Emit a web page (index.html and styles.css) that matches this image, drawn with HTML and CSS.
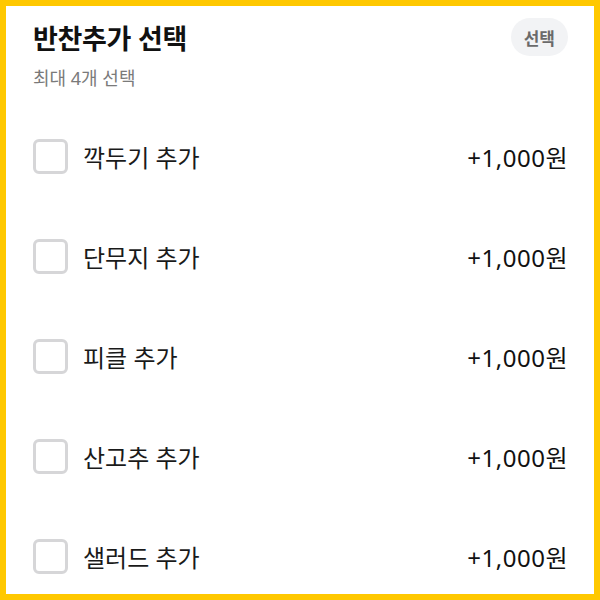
FILE: index.html
```html
<!doctype html>
<html lang="ko">
 <head>
  <meta charset="UTF-8">
  <title>반찬추가 선택</title>
  <link rel="stylesheet" href="styles.css">
 </head>
 <body>
  <section class="panel">
   <div class="head">
    <h2>반찬추가 선택</h2>
    <span class="badge">선택</span>
   </div>
   <p class="sub">최대 4개 선택</p>
   <ul class="list">
    <li class="row"><label class="opt"><input type="checkbox"><span class="box"></span><span class="name">깍두기 추가</span></label><span class="price">+1,000원</span></li>
    <li class="row"><label class="opt"><input type="checkbox"><span class="box"></span><span class="name">단무지 추가</span></label><span class="price">+1,000원</span></li>
    <li class="row"><label class="opt"><input type="checkbox"><span class="box"></span><span class="name">피클 추가</span></label><span class="price">+1,000원</span></li>
    <li class="row"><label class="opt"><input type="checkbox"><span class="box"></span><span class="name">산고추 추가</span></label><span class="price">+1,000원</span></li>
    <li class="row"><label class="opt"><input type="checkbox"><span class="box"></span><span class="name">샐러드 추가</span></label><span class="price">+1,000원</span></li>
   </ul>
  </section>
 </body>
</html>
```
FILE: styles.css
```css
*
{
  margin: 0;
  padding: 0;
  box-sizing: border-box;
  font-family: 'Noto Sans', 'Noto Sans CJK KR', sans-serif;
}
body
{
  width: 600px;
  height: 600px;
  overflow: hidden;
  background: #fff;
}
.panel
{
  width: 600px;
  height: 600px;
  border: 6px solid #ffc800;
  padding: 12px 26px 0 27px;
  overflow: hidden;
}
.head
{
  display: flex;
  justify-content: space-between;
  align-items: center;
  height: 38px;
}
.head h2
{
  font-size: 27px;
  font-weight: 700;
  color: #111;
  letter-spacing: -0.3px;
}
.badge
{
  display: flex;
  align-items: center;
  justify-content: center;
  height: 38px;
  padding: 0 13px;
  border-radius: 19px;
  background: #f2f3f5;
  color: #6a6a6a;
  font-size: 17px;
  font-weight: 700;
}
.sub
{
  margin-top: 11px;
  font-size: 18px;
  line-height: 22px;
  color: #7a7a7a;
}
.list
{
  list-style: none;
  margin-top: 17px;
}
.row
{
  height: 100px;
  display: flex;
  justify-content: space-between;
  align-items: center;
}
.opt
{
  display: flex;
  align-items: center;
  gap: 15px;
  cursor: pointer;
}
.opt input
{
  display: none;
}
.box
{
  width: 35px;
  height: 35px;
  border: 3px solid #d6d6d8;
  border-radius: 6px;
}
.opt input:checked + .box
{
  background: #ffc800;
  border-color: #ffc800;
}
.name
{
  font-size: 24px;
  color: #1a1a1a;
}
.price
{
  font-size: 24px;
  letter-spacing: 0.5px;
  color: #111;
}
```
